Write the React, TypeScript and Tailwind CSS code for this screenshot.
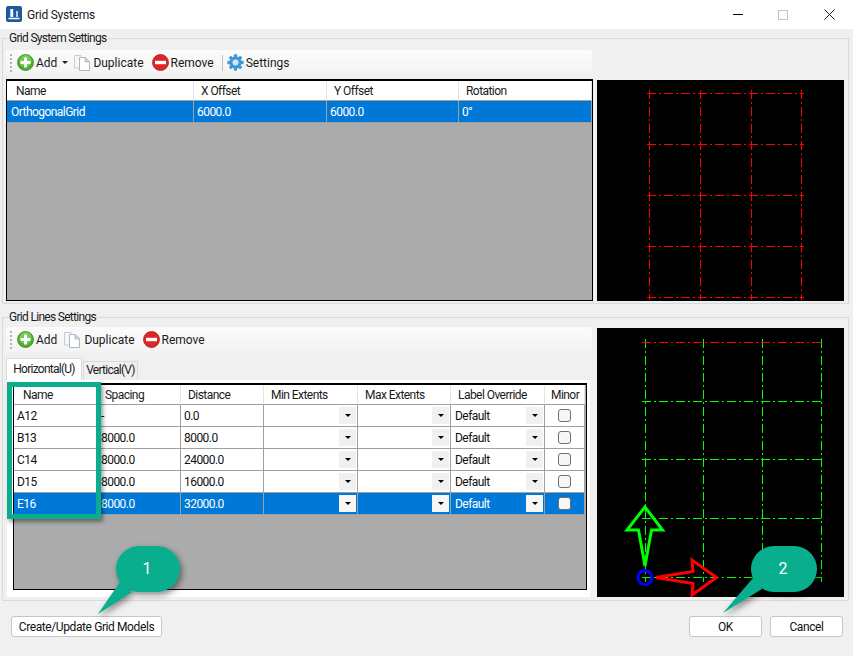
import React from "react";

const FONT = "font-['Roboto','Noto_Sans',sans-serif]";

function AddIcon() {
  return (
    <svg width="17" height="17" viewBox="0 0 17 17" className="shrink-0">
      <circle cx="8.5" cy="8.5" r="8" fill="#4fae2e" stroke="#3c8f22" strokeWidth="0.8" />
      <circle cx="8.5" cy="7" r="6" fill="#8fd66a" opacity="0.7" />
      <rect x="7" y="3.5" width="3" height="10" fill="#fff" />
      <rect x="3.5" y="7" width="10" height="3" fill="#fff" />
    </svg>
  );
}

function DuplicateIcon() {
  return (
    <svg width="17" height="17" viewBox="0 0 17 17" className="shrink-0">
      <path d="M0.5 1.5H7L7 14H0.5Z" fill="#f4f6fa" stroke="#b9c2d0" strokeWidth="0.8" />
      <path d="M5.5 3.5H11L15.5 8V16.5H5.5Z" fill="#fff" stroke="#9aa7ba" strokeWidth="0.8" />
      <path d="M11 3.5V8H15.5Z" fill="#cfd8e6" stroke="#9aa7ba" strokeWidth="0.6" />
    </svg>
  );
}

function RemoveIcon() {
  return (
    <svg width="17" height="17" viewBox="0 0 17 17" className="shrink-0">
      <circle cx="8.5" cy="8.5" r="8" fill="#dc2626" stroke="#b51b1b" strokeWidth="0.8" />
      <rect x="3" y="6.8" width="11" height="3.4" fill="#fff" />
    </svg>
  );
}

function GearIcon() {
  return (
    <svg width="17" height="17" viewBox="0 0 17 17" className="shrink-0">
      <g fill="#3f97d6">
        <circle cx="8.5" cy="8.5" r="6" />
        <rect x="6.8" y="0.3" width="3.4" height="16.4" rx="1" />
        <rect x="0.3" y="6.8" width="16.4" height="3.4" rx="1" />
        <rect x="6.8" y="0.3" width="3.4" height="16.4" rx="1" transform="rotate(45 8.5 8.5)" />
        <rect x="6.8" y="0.3" width="3.4" height="16.4" rx="1" transform="rotate(-45 8.5 8.5)" />
      </g>
      <circle cx="8.5" cy="8.5" r="3" fill="#cfe6f6" />
    </svg>
  );
}

function Grip() {
  return (
    <div className="flex flex-col gap-[2px] ml-[4px] mr-[5px] shrink-0">
      {[0, 1, 2, 3, 4].map((i) => (
        <div key={i} className="w-[2px] h-[2px] bg-[#b4b4b4]" />
      ))}
    </div>
  );
}

function ToolBtn({ icon, label, gap = "ml-[2px]", end = "mr-[8px]" }: { icon: React.ReactNode; label: string; gap?: string; end?: string }) {
  return (
    <div className={`flex items-center ${end}`}>
      {icon}
      <span className={`${gap} text-[12px] text-[#1a1a1a]`}>{label}</span>
    </div>
  );
}

function Toolbar({ children }: { children: React.ReactNode }) {
  return (
    <div className="w-[586px] h-[25px] flex items-center bg-gradient-to-b from-[#fbfbfb] to-[#f3f3f3] rounded-tr-[3px]">
      <Grip />
      {children}
    </div>
  );
}

function Group({ title, children, className }: { title: string; children: React.ReactNode; className: string }) {
  return (
    <fieldset className={`ml-[2px] w-[847px] border border-[#dadada] ${className}`}>
      <legend className="ml-[2px] px-[1px] text-[12px] leading-[14px] tracking-[-0.7px] text-[#1a1a1a]">{title}</legend>
      {children}
    </fieldset>
  );
}

function Check() {
  return <div className="w-[13px] h-[13px] rounded-[3px] border border-[#6f6f6f] bg-[#f6f6f6]" />;
}

function Combo({ text, selected }: { text?: string; selected: boolean }) {
  return (
    <div className="flex items-center justify-between h-full pl-[4px] pr-[1px]">
      <span>{text}</span>
      <div className={`w-[17px] h-[17px] flex items-center justify-center ${selected ? "bg-[#f6f6f6]" : "bg-[#f0f0f0]"}`}>
        <div className="w-0 h-0 border-x-[3px] border-x-transparent border-t-[3px] border-t-black" />
      </div>
    </div>
  );
}

function Cell({ className = "", children }: { className?: string; children?: React.ReactNode }) {
  return <div className={`border-r border-b border-[#a0a0a0] text-[12px] tracking-[-0.55px] leading-[22px] h-[22px] overflow-hidden ${className}`}>{children}</div>;
}

function Head({ label, pad = "pl-[7px]" }: { label: string; pad?: string }) {
  return <div className={`h-[20px] leading-[20px] bg-white border-r border-[#e4e4e4] border-b border-b-[#a0a0a0] text-[12px] tracking-[-0.55px] text-[#1a1a1a] ${pad}`}>{label}</div>;
}

function SystemTable() {
  const cell = "bg-[#0078d7] text-white pl-[3px]";
  return (
    <div className="mt-[4px] w-[587px] h-[222px] border border-black border-t-2 bg-[#ababab]">
      <div className="grid grid-cols-[187px_133px_132px_133px]">
        <Head label="Name" pad="pl-[9px]" />
        <Head label="X Offset" />
        <Head label="Y Offset" />
        <Head label="Rotation" />
        <Cell className="bg-[#0078d7] text-white pl-[4px]">OrthogonalGrid</Cell>
        <Cell className={cell}>6000.0</Cell>
        <Cell className={cell}>6000.0</Cell>
        <Cell className={cell}>0°</Cell>
      </div>
    </div>
  );
}

const LINES = [
  ["A12", "-", "0.0"],
  ["B13", "8000.0", "8000.0"],
  ["C14", "8000.0", "24000.0"],
  ["D15", "8000.0", "16000.0"],
  ["E16", "8000.0", "32000.0"],
];

function LinesTable() {
  return (
    <div className="w-[574px] h-[207px] border border-black border-t-2 bg-[#ababab]">
      <div className="grid grid-cols-[85px_82px_83px_94px_93px_94px_40px]">
        <Head label="Name" pad="pl-[9px]" />
        <Head label="Spacing" pad="pl-[6px]" />
        <Head label="Distance" pad="pl-[7px]" />
        <Head label="Min Extents" pad="pl-[7px]" />
        <Head label="Max Extents" pad="pl-[7px]" />
        <Head label="Label Override" pad="pl-[7px]" />
        <Head label="Minor" pad="pl-[6px]" />
        {LINES.map((r, i) => {
          const sel = i === 4;
          const bg = sel ? "bg-[#0078d7] text-white" : "bg-white text-[#111]";
          return (
            <React.Fragment key={r[0]}>
              <Cell className={`${bg} pl-[3px]`}>{r[0]}</Cell>
              <Cell className={`${bg} pl-[2px]`}>{r[1]}</Cell>
              <Cell className={`${bg} pl-[3px]`}>{r[2]}</Cell>
              <Cell className={bg}><Combo selected={sel} /></Cell>
              <Cell className={bg}><Combo selected={sel} /></Cell>
              <Cell className={bg}><Combo text="Default" selected={sel} /></Cell>
              <Cell className={`${bg} flex items-center justify-center`}><Check /></Cell>
            </React.Fragment>
          );
        })}
      </div>
    </div>
  );
}

const DASH = "9 3 2 3";

function TopPreview() {
  const xs = [52.5, 103.5, 154.5, 204.5];
  const ys = [13.5, 64.5, 115.5, 166.5, 217.5];
  return (
    <svg width="247" height="221" className="block shrink-0 bg-black">
      {xs.map((x) => (
        <line key={x} x1={x} x2={x} y1="10" y2="220" stroke="#ff0000" strokeDasharray={DASH} />
      ))}
      {ys.map((y) => (
        <line key={y} y1={y} y2={y} x1="50" x2="207" stroke="#ff0000" strokeDasharray={DASH} />
      ))}
    </svg>
  );
}

function BottomPreview() {
  const xs = [48.5, 106.5, 165.5, 224.5];
  const ys = [73.5, 131.5, 190.5, 249.5];
  return (
    <svg width="247" height="269" className="block shrink-0 bg-black">
      {xs.map((x) => (
        <line key={x} x1={x} x2={x} y1="11" y2="254" stroke="#00ff00" strokeDasharray={DASH} />
      ))}
      {ys.map((y) => (
        <line key={y} y1={y} y2={y} x1="45" x2="227" stroke="#00ff00" strokeDasharray={DASH} />
      ))}
      <line y1="14.5" y2="14.5" x1="45" x2="227" stroke="#ff0000" strokeDasharray={DASH} />
      <path d="M48 179L30 202H41.5L48 238L54.5 202H65.5Z" fill="none" stroke="#00ff00" strokeWidth="3" strokeLinejoin="miter" />
      <path d="M59 249.5L96 243.5L95 232L119.5 249.5L95 267L96 255.5Z" fill="none" stroke="#ff0000" strokeWidth="3" />
      <circle cx="48" cy="249.5" r="7" fill="none" stroke="#0000ff" strokeWidth="3" />
    </svg>
  );
}

function Button({ label, className }: { label: string; className: string }) {
  return (
    <div className={`h-[21px] bg-white border border-[#c6c6c6] rounded-[3px] flex items-center justify-center text-[12px] tracking-[-0.4px] text-[#111] ${className}`}>
      {label}
    </div>
  );
}

function Callout({ label, className, tail, bw, labelClass }: { label: string; className: string; tail: string; bw: number; labelClass: string }) {
  return (
    <div className={`absolute w-[100px] h-[80px] ${className}`}>
      <svg width="100" height="80" className="absolute inset-0 overflow-visible drop-shadow-[2px_3px_3px_rgba(0,0,0,0.45)]">
        <rect x="30" y="0" width={bw} height="46" rx="23" fill="#08ae8e" />
        <polygon points={tail} fill="#08ae8e" />
      </svg>
      <span className={`absolute left-[30px] top-0 h-[46px] flex items-center justify-center text-[16px] text-white ${labelClass}`}>{label}</span>
    </div>
  );
}

export default function App() {
  return (
    <div className={`relative w-[853px] h-[656px] bg-[#f0f0f0] overflow-hidden ${FONT}`}>
      <div className="h-[29px] bg-white flex items-center">
        <svg width="16" height="16" viewBox="0 0 16 16" className="ml-[6px] mb-[1px]">
          <rect width="16" height="16" rx="2" fill="#1c5a9c" />
          <path d="M5 3V11M2.5 12.5H13.5M6.5 3V11M11 5V11" stroke="#fff" strokeWidth="1.4" fill="none" />
        </svg>
        <span className="ml-[5px] text-[12px] tracking-[-0.25px] text-[#1a1a1a]">Grid Systems</span>
        <div className="ml-auto flex items-center mr-[18px]">
          <div className="w-[10px] h-[1px] bg-black mr-[35px]" />
          <div className="w-[10px] h-[10px] border border-[#c4c4c4] mr-[36px]" />
          <svg width="11" height="11" viewBox="0 0 11 11">
            <path d="M0.5 0.5L10.5 10.5M10.5 0.5L0.5 10.5" stroke="#222" strokeWidth="1" />
          </svg>
        </div>
      </div>

      <Group title="Grid System Settings" className="mt-[2px] h-[273px] pt-[5px] pl-[3px]">
        <div className="flex">
          <div className="w-[587px]">
            <Toolbar>
              <ToolBtn icon={<AddIcon />} label="Add" end="mr-[7px]" />
              <div className="w-0 h-0 border-x-[3px] border-x-transparent border-t-[3px] border-t-[#222] -ml-[2px] mr-[6px]" />
              <ToolBtn icon={<DuplicateIcon />} label="Duplicate" />
              <ToolBtn icon={<RemoveIcon />} label="Remove" />
              <div className="w-[1px] h-[16px] bg-[#c0c0c0] mr-[4px]" />
              <ToolBtn icon={<GearIcon />} label="Settings" />
            </Toolbar>
            <SystemTable />
          </div>
          <div className="ml-[4px] mt-[30px]">
            <TopPreview />
          </div>
        </div>
      </Group>

      <Group title="Grid Lines Settings" className="mt-[6px] h-[291px] pt-[3px] pl-[3px]">
        <div className="flex">
          <div className="w-[587px]">
            <Toolbar>
              <ToolBtn icon={<AddIcon />} label="Add" end="mr-[7px]" />
              <ToolBtn icon={<DuplicateIcon />} label="Duplicate" gap="ml-[3px]" />
              <ToolBtn icon={<RemoveIcon />} label="Remove" />
            </Toolbar>
            <div className="mt-[6px] flex items-end h-[22px]">
              <div className="w-[76px] h-[22px] bg-white border border-b-0 border-[#dadada] text-[12px] tracking-[-0.75px] text-center leading-[20px] text-[#1a1a1a]">Horizontal(U)</div>
              <div className="ml-[1px] w-[55px] h-[19px] bg-[#f0f0f0] border border-b-0 border-[#dadada] text-[12px] tracking-[-0.75px] text-center leading-[17px] text-[#1a1a1a]">Vertical(V)</div>
            </div>
            <div className="ml-[1px] w-[583px] h-[217px] bg-white pl-[6px] pt-[3px]">
              <LinesTable />
            </div>
          </div>
          <div className="ml-[4px] mt-[1px]">
            <BottomPreview />
          </div>
        </div>
      </Group>

      <div className="mt-[15px] flex items-center px-[11px]">
        <Button label="Create/Update Grid Models" className="w-[151px]" />
        <Button label="OK" className="ml-auto w-[73px]" />
        <Button label="Cancel" className="ml-[8px] w-[73px] mr-[-1px]" />
      </div>

      <div className="absolute left-[7px] top-[382px] w-[94px] h-[137px] border-[5px] border-[#0aae8e] shadow-[2px_3px_4px_rgba(0,0,0,0.4)]" />
      <Callout label="1" bw={64} labelClass="w-[62px]" className="left-[86px] top-[546px]" tail="34,36 46,46 12,68" />
      <Callout label="2" bw={66} labelClass="w-[64px]" className="left-[721px] top-[546px]" tail="32,32 41,43 2,67" />
    </div>
  );
}
